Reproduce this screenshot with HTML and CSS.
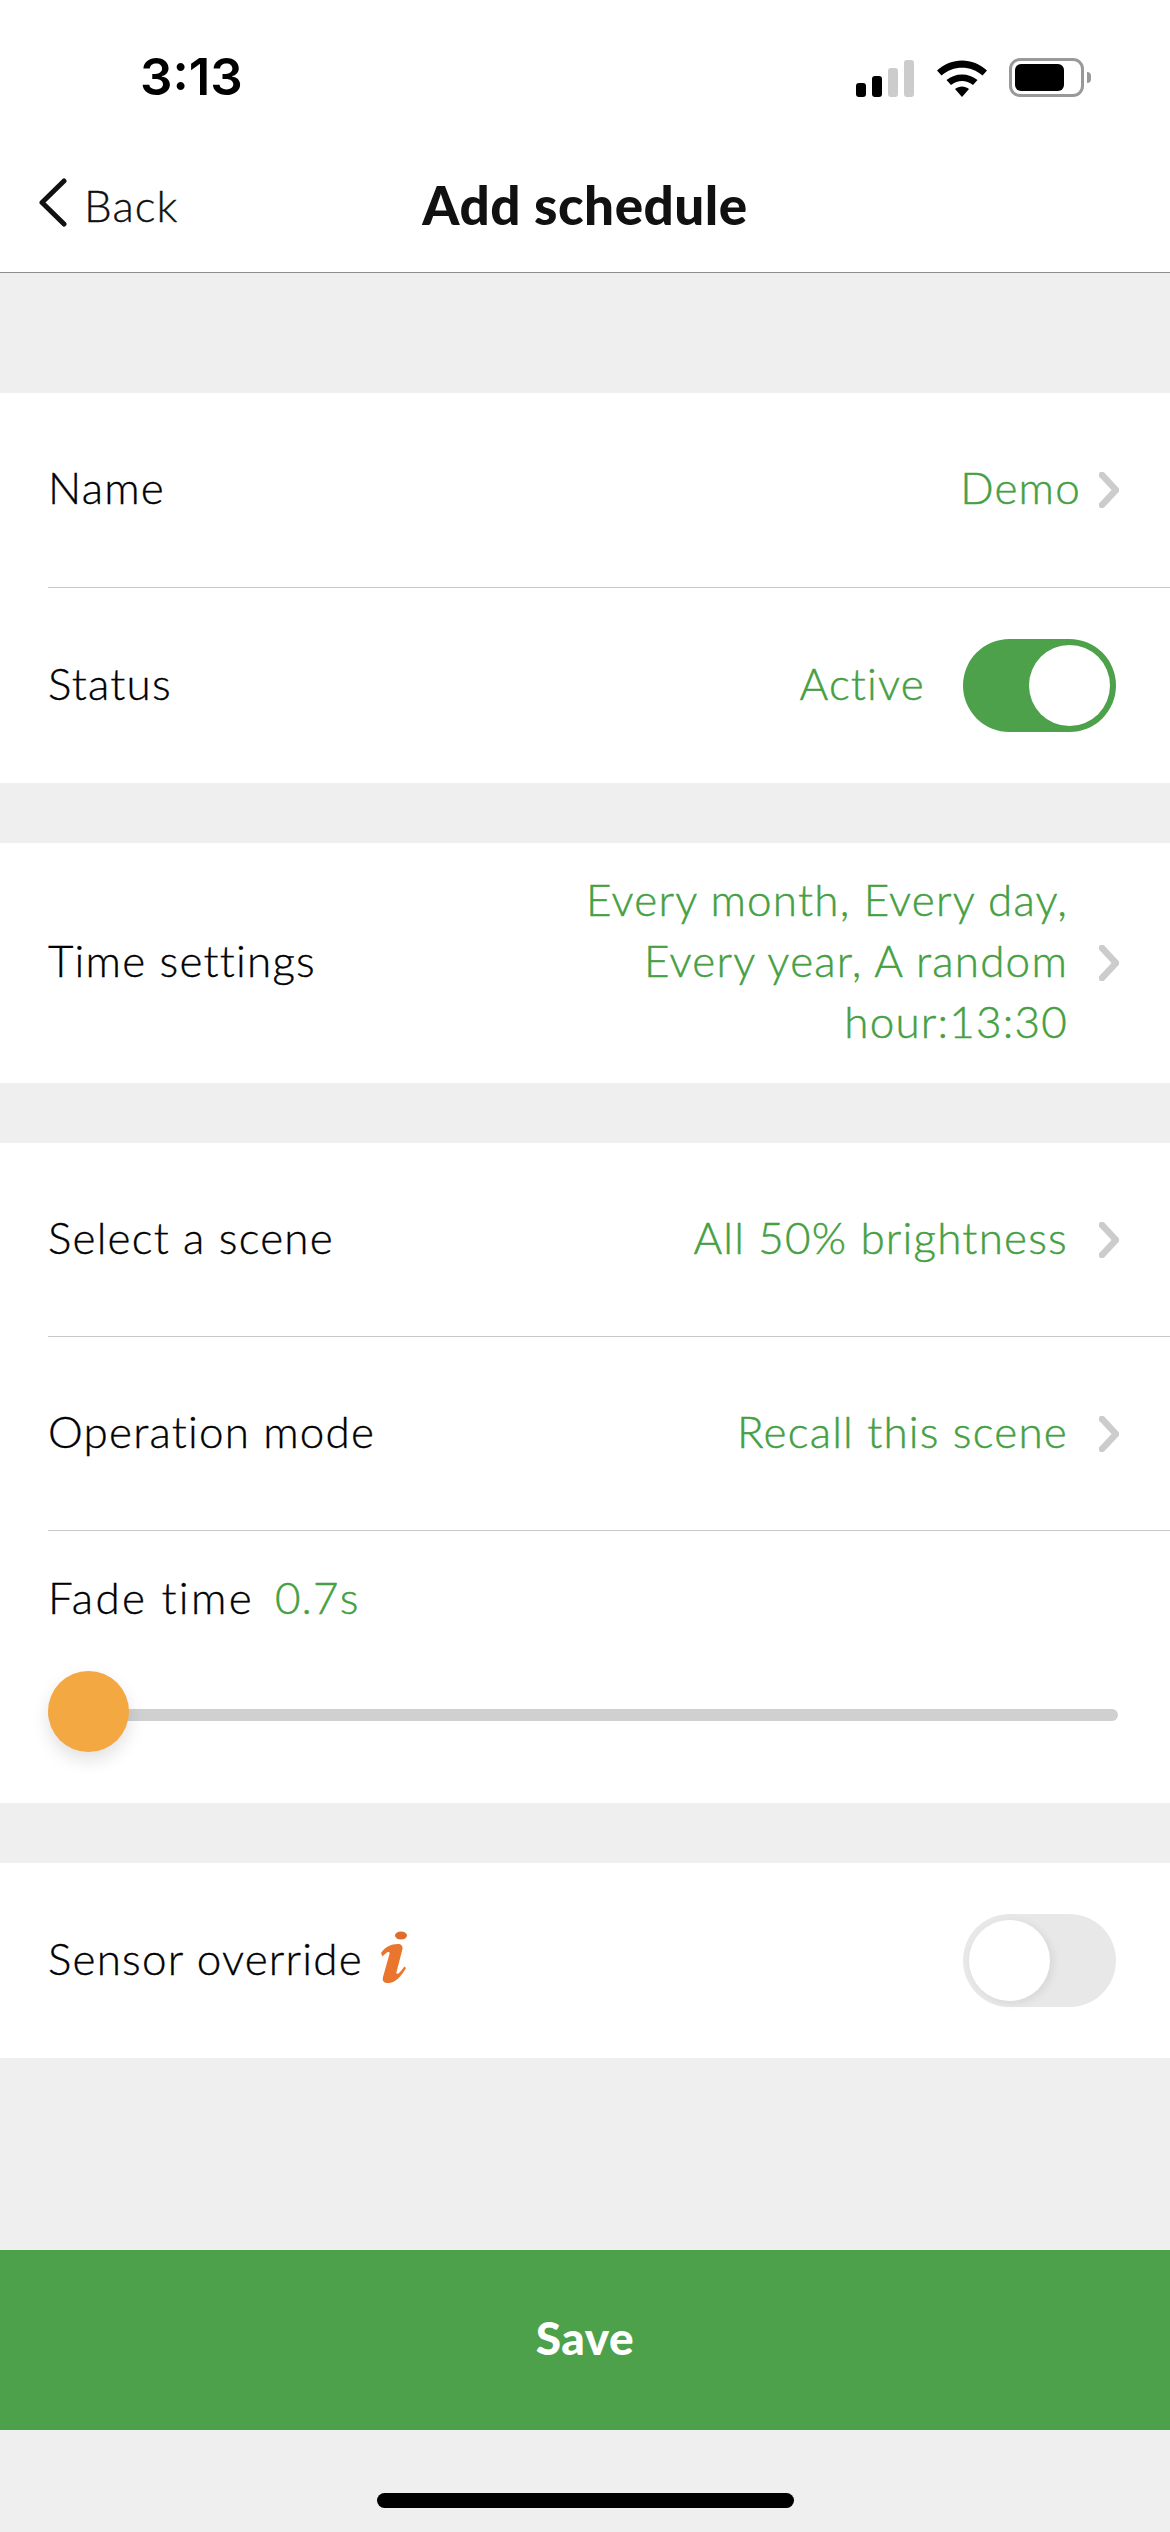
FILE: index.html
```html
<!DOCTYPE html>
<html lang="en">

<head>
    <meta charset="UTF-8">
    <meta name="viewport" content="width=device-width, initial-scale=1.0">
    <title>Add schedule</title>
    <link rel="stylesheet" href="styles.css">
</head>

<body>
    <header class="top">
        <div class="status-bar">
            <span class="clock">3:13</span>
            <div class="status-icons">
                <svg class="signal" width="58" height="37" viewBox="0 0 58 37">
                    <rect x="0" y="23" width="10" height="14" rx="3" fill="#000" />
                    <rect x="16" y="16" width="10" height="21" rx="3" fill="#000" />
                    <rect x="32" y="8" width="10" height="29" rx="3" fill="#ccc" />
                    <rect x="48" y="0" width="10" height="37" rx="3" fill="#ccc" />
                </svg>
                <svg class="wifi" width="50" height="37" viewBox="0 0 50 37">
                    <path d="M0 10.5C14-3 36-3 50 10.5L45.500 15.500C34 5 16 5 4.500 15.500Z" fill="#000" />
                    <path d="M9.500 20C18 12.500 32 12.500 40.500 20L36 25C29 19.500 21 19.500 14 25Z" fill="#000" />
                    <path d="M18 29C22 25.500 28 25.500 32 29L25 37Z" fill="#000" />
                </svg>
                <div class="battery">
                    <div class="battery-level"></div>
                </div>
                <div class="battery-nub"></div>
            </div>
        </div>
        <nav class="nav-bar">
            <div class="back">
                <svg width="29" height="49" viewBox="0 0 29 49">
                    <path d="M26 3L4 24.500L26 46" fill="none" stroke="#111" stroke-width="5" stroke-linecap="round" stroke-linejoin="round" />
                </svg>
                <span>Back</span>
            </div>
            <h1>Add schedule</h1>
        </nav>
    </header>

    <section class="group first">
        <div class="row">
            <span class="label">Name</span>
            <div class="right">
                <span class="value value-near">Demo</span>
                <svg class="chevron" width="20" height="36" viewBox="0 0 20 36">
                    <path d="M3 3L17 18L3 33" />
                </svg>
            </div>
        </div>
        <div class="row row-last">
            <span class="label">Status</span>
            <div class="right">
                <span class="value value-active">Active</span>
                <div class="toggle on">
                    <div class="knob"></div>
                </div>
            </div>
        </div>
    </section>

    <section class="group">
        <div class="row row-tall row-last">
            <span class="label">Time settings</span>
            <div class="right">
                <span class="value value-lines">Every month, Every day,<br>Every year, A random<br>hour:13:30</span>
                <svg class="chevron" width="20" height="36" viewBox="0 0 20 36">
                    <path d="M3 3L17 18L3 33" />
                </svg>
            </div>
        </div>
    </section>

    <section class="group">
        <div class="row">
            <span class="label">Select a scene</span>
            <div class="right">
                <span class="value">All 50% brightness</span>
                <svg class="chevron" width="20" height="36" viewBox="0 0 20 36">
                    <path d="M3 3L17 18L3 33" />
                </svg>
            </div>
        </div>
        <div class="row">
            <span class="label">Operation mode</span>
            <div class="right">
                <span class="value">Recall this scene</span>
                <svg class="chevron" width="20" height="36" viewBox="0 0 20 36">
                    <path d="M3 3L17 18L3 33" />
                </svg>
            </div>
        </div>
        <div class="fade">
            <div class="fade-head">
                <span class="label fade-label">Fade time</span>
                <span class="value">0.7s</span>
            </div>
            <div class="slider">
                <div class="track"></div>
                <div class="thumb"></div>
            </div>
        </div>
    </section>

    <section class="group">
        <div class="row row-last">
            <div class="sensor">
                <span class="label">Sensor override</span>
                <svg class="info" width="27" height="54" viewBox="0 0 27 54">
                    <ellipse cx="21" cy="5.500" rx="6" ry="4" fill="#df6b2c" />
                    <path d="M1 23C5 17 11 14 18 14C21 14 23 16 22.500 19L16.500 42C16 44 17.500 44.500 19 43C21 41 23 38.500 24.500 36.500L26 38C22 45 16 53 8 53C4 53 2 51 3 47L9.500 24C10 22 8.500 21.500 7 22.500C5.500 23.500 4 25 2.500 26.500Z" fill="#ea752c" />
                </svg>
            </div>
            <div class="right">
                <div class="toggle off">
                    <div class="knob"></div>
                </div>
            </div>
        </div>
    </section>

    <div class="spacer"></div>
    <button class="save">Save</button>
    <div class="home-area">
        <div class="home-bar"></div>
    </div>
</body>

</html>
```

FILE: styles.css
```css
* {
    box-sizing: border-box;
}

body {
    font-family: Lato, "Open Sans", sans-serif;
    display: flex;
    flex-direction: column;
    width: 1170px;
    height: 2532px;
    margin: 0;
    overflow: hidden;
    background: #efefef;
    color: #111;
}

.top {
    background: white;
    border-bottom: 1px solid #8e8e8e;
    height: 273px;
}

.status-bar {
    display: flex;
    justify-content: space-between;
    align-items: flex-start;
    height: 150px;
}

.clock {
    font-family: Inter, sans-serif;
    font-weight: 600;
    font-size: 51px;
    line-height: 56px;
    margin: 49px 0 0 140px;
    color: #000;
}

.status-icons {
    display: flex;
    align-items: flex-end;
    margin: 58px 79px 0 0;
    height: 39px;
}

.signal {
    margin-right: 23px;
}

.wifi {
    margin-right: 22px;
}

.battery {
    width: 75px;
    height: 39px;
    border: 3px solid #999;
    border-radius: 11px;
    padding: 3px;
}

.battery-level {
    width: 49px;
    height: 27px;
    background: black;
    border-radius: 6px;
}

.battery-nub {
    width: 4px;
    height: 11px;
    margin: 0 0 14px 3px;
    background: #999;
    border-radius: 0 4px 4px 0;
}

.nav-bar {
    display: flex;
    align-items: center;
    justify-content: center;
    position: relative;
    height: 112px;
}

.back {
    position: absolute;
    left: 38px;
    top: 27px;
    display: flex;
    align-items: center;
    gap: 17px;
    font-size: 44px;
    font-weight: 300;
    line-height: 56px;
    letter-spacing: 1px;
    -webkit-text-stroke: 0.35px #111;
}

.back svg {
    margin-top: -6px;
}

.nav-bar h1 {
    margin: 0 0 2px;
    font-size: 53px;
    font-weight: 900;
    line-height: 60px;
    letter-spacing: 0.5px;
    color: #111;
}

.group {
    background: white;
    margin-top: 60px;
    flex-shrink: 0;
}

.group.first {
    margin-top: 120px;
}

.group.first .row {
    height: 195px;
}

.row {
    display: flex;
    align-items: center;
    justify-content: space-between;
    height: 194px;
    margin-left: 48px;
    padding-right: 51px;
    border-bottom: 1px solid #c8c8c8;
}

.row-last {
    border-bottom: none;
    height: 195px;
}

.row.row-tall {
    height: 240px;
}

.label {
    padding-bottom: 6px;
    font-size: 44px;
    font-weight: 300;
    line-height: 56px;
    letter-spacing: 1.2px;
    color: #000;
    -webkit-text-stroke: 0.35px #000;
}

.fade-label {
    letter-spacing: 2.3px;
}

.right {
    display: flex;
    align-items: center;
}

.value {
    padding-bottom: 6px;
    font-size: 44px;
    font-weight: 300;
    line-height: 56px;
    letter-spacing: 1.2px;
    color: #45a043;
    -webkit-text-stroke: 0.45px #45a043;
}

.value-near {
    margin-right: -13px;
}

.value-active {
    margin-right: 38px;
}

.value-lines {
    line-height: 61px;
    text-align: right;
}

.chevron {
    margin-left: 31px;
}

.chevron path {
    fill: none;
    stroke: #ccc;
    stroke-width: 6.500;
    stroke-linecap: round;
    stroke-linejoin: round;
}

.toggle {
    display: flex;
    align-items: center;
    width: 153px;
    height: 93px;
    margin-right: 3px;
    padding: 6px;
    border-radius: 47px;
}

.toggle.on {
    background: #4ca14a;
    justify-content: flex-end;
}

.toggle.off {
    background: #e8e8e8;
}

.knob {
    width: 81px;
    height: 81px;
    background: white;
    border-radius: 50%;
}

.toggle.off .knob {
    box-shadow: 3px 2px 8px rgba(0, 0, 0, 0.08);
}

.fade {
    height: 272px;
    padding: 38px 52px 0 48px;
}

.fade-head {
    display: flex;
    gap: 21px;
}

.slider {
    position: relative;
    height: 81px;
    margin-top: 40px;
}

.track {
    position: absolute;
    left: 0;
    right: 0;
    top: 38px;
    height: 12px;
    background: #d0d0d0;
    border-radius: 6px;
}

.thumb {
    position: absolute;
    left: 0;
    top: 0;
    width: 81px;
    height: 81px;
    background: #f4a842;
    border-radius: 50%;
    box-shadow: 0 8px 18px rgba(0, 0, 0, 0.12);
}

.sensor {
    display: flex;
    align-items: center;
    gap: 17px;
}

.info {
    margin-top: -8px;
}

.spacer {
    flex: 1;
}

.save {
    display: block;
    width: 100%;
    height: 180px;
    flex-shrink: 0;
    padding-bottom: 6px;
    border: none;
    background: #4ca14a;
    color: white;
    font-family: Lato, sans-serif;
    font-size: 46px;
    font-weight: 900;
    letter-spacing: 0.5px;
}

.home-area {
    display: flex;
    justify-content: center;
    height: 102px;
    padding-top: 63px;
    flex-shrink: 0;
}

.home-bar {
    width: 417px;
    height: 15px;
    background: black;
    border-radius: 8px;
}
```
